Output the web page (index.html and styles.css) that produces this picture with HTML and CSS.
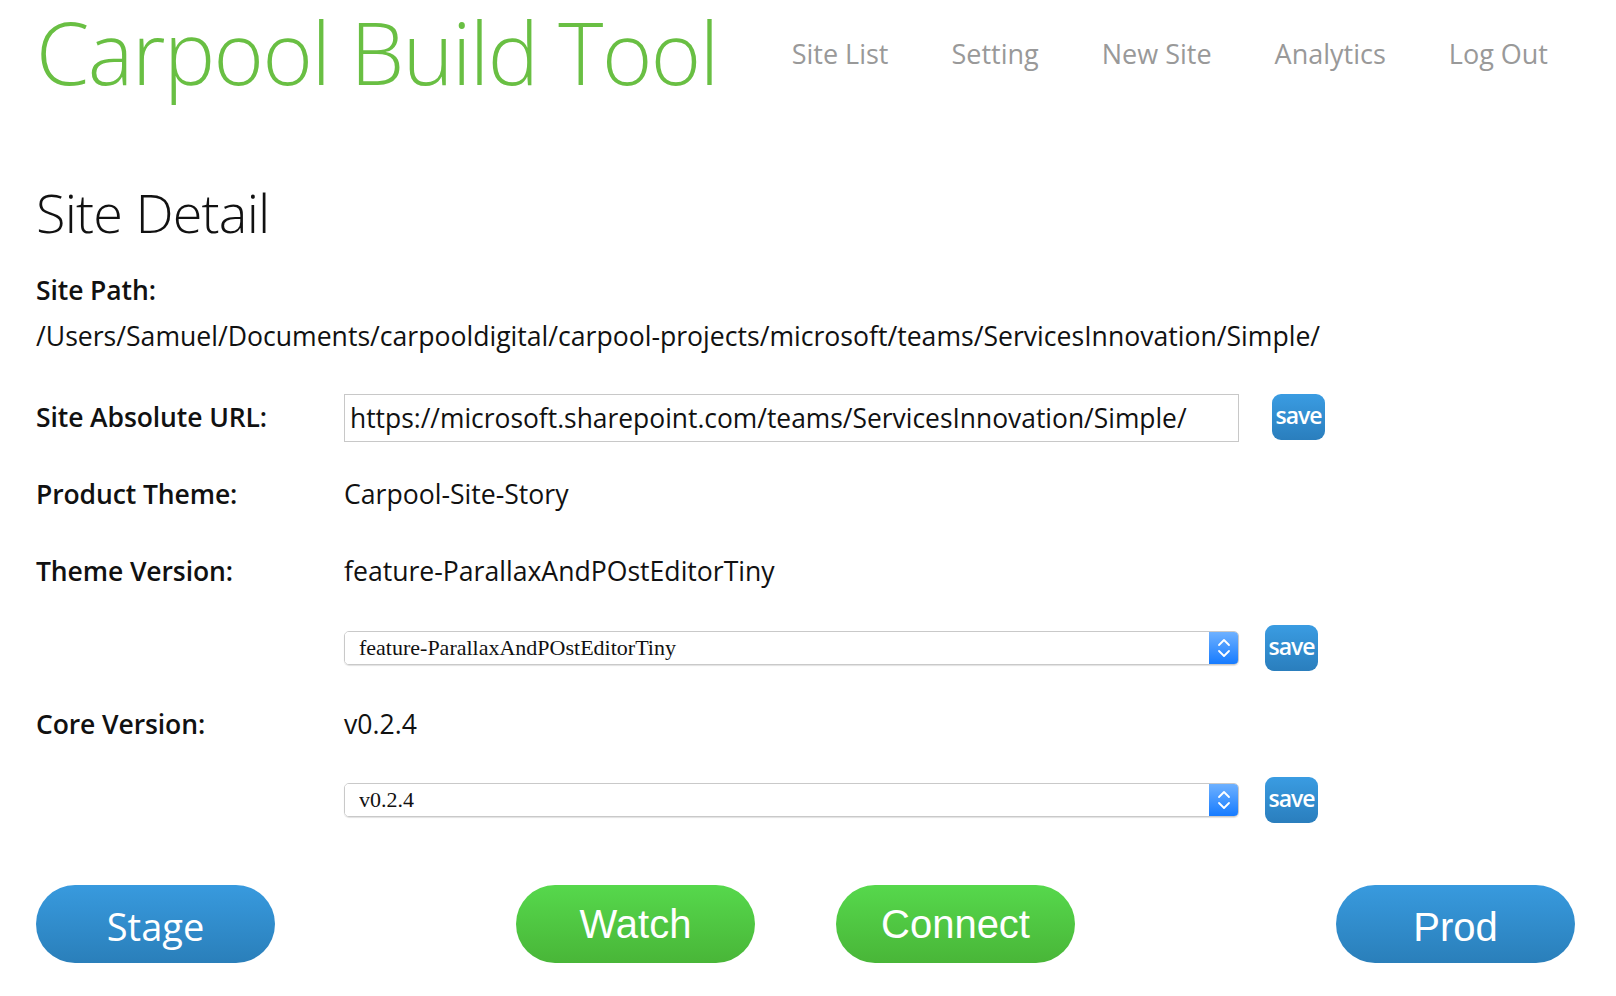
FILE: index.html
```html
<!DOCTYPE html>
<html>
<head>
<meta charset="utf-8">
<title>Carpool Build Tool</title>
<link rel="stylesheet" href="styles.css">
</head>
<body>
<header class="top">
  <h1 class="brand">Carpool Build Tool</h1>
  <nav class="nav">
    <a class="nav-link" href="#">Site List</a>
    <a class="nav-link" href="#">Setting</a>
    <a class="nav-link" href="#">New Site</a>
    <a class="nav-link" href="#">Analytics</a>
    <a class="nav-link" href="#">Log Out</a>
  </nav>
</header>
<main class="content">
  <h2 class="page-title">Site Detail</h2>
  <div class="path-block">
    <div class="label">Site Path:</div>
    <div class="path">/Users/Samuel/Documents/carpooldigital/carpool-projects/microsoft/teams/ServicesInnovation/Simple/</div>
  </div>
  <div class="form">
    <div class="row row-url">
      <div class="label">Site Absolute URL:</div>
      <input class="text-input" type="text" value="https://microsoft.sharepoint.com/teams/ServicesInnovation/Simple/">
      <button class="save save-url">save</button>
    </div>
    <div class="row">
      <div class="label">Product Theme:</div>
      <div class="value">Carpool-Site-Story</div>
    </div>
    <div class="row">
      <div class="label">Theme Version:</div>
      <div class="value">feature-ParallaxAndPOstEditorTiny</div>
    </div>
    <div class="row row-select">
      <div class="label"></div>
      <div class="select">
        <select class="select-el"><option>feature-ParallaxAndPOstEditorTiny</option></select>
        <span class="select-arrow"><svg width="14" height="26" viewBox="0 0 14 26"><path d="M2 10 L7 5 L12 10 M2 16 L7 21 L12 16" fill="none" stroke="#fff" stroke-width="1.8" stroke-linecap="round" stroke-linejoin="round"/></svg></span>
      </div>
      <button class="save">save</button>
    </div>
    <div class="row row-core">
      <div class="label">Core Version:</div>
      <div class="value">v0.2.4</div>
    </div>
    <div class="row row-select">
      <div class="label"></div>
      <div class="select">
        <select class="select-el"><option>v0.2.4</option></select>
        <span class="select-arrow"><svg width="14" height="26" viewBox="0 0 14 26"><path d="M2 10 L7 5 L12 10 M2 16 L7 21 L12 16" fill="none" stroke="#fff" stroke-width="1.8" stroke-linecap="round" stroke-linejoin="round"/></svg></span>
      </div>
      <button class="save">save</button>
    </div>
  </div>
  <div class="actions">
    <button class="pill pill-blue pill-seg">Stage</button>
    <div class="mid-actions">
      <button class="pill pill-green">Watch</button>
      <button class="pill pill-green">Connect</button>
    </div>
    <button class="pill pill-blue pill-prod">Prod</button>
  </div>
</main>
</body>
</html>
```
FILE: styles.css
```css
* { box-sizing: border-box; }
html, body { margin: 0; padding: 0; background: #fff; }
body {
  font-family: "Open Sans", "Noto Sans", sans-serif;
  color: #111;
  width: 1616px;
  height: 996px;
  overflow: hidden;
}
.top {
  display: flex;
  align-items: flex-start;
  justify-content: space-between;
  padding: 0 68px 0 36px;
  height: 150px;
}
.brand {
  margin: -8px 0 0;
  padding: 0;
  flex-shrink: 0;
  white-space: nowrap;
  font-weight: 300;
  font-size: 86px;
  letter-spacing: -1.5px;
  line-height: 1.4;
  color: #69bf43;
}
.nav {
  display: flex;
  gap: 63px;
  padding-top: 34px;
}
.nav-link {
  font-size: 27px;
  color: #999;
  text-decoration: none;
  line-height: 40px;
}
.content { padding: 0 36px; }
.page-title {
  margin: 26px 0 0;
  font-weight: 300;
  font-size: 54px;
  line-height: 72px;
  color: #111;
  letter-spacing: -0.8px;
}
.label {
  font-weight: 600;
  font-size: 26.5px;
  color: #111;
  letter-spacing: -0.1px;
}
.path-block .label { margin-top: 22px; line-height: 40px; }
.path {
  margin-top: 2px;
  font-size: 26.6px;
  line-height: 48px;
}
.form { margin-top: 18px; }
.row {
  display: grid;
  grid-template-columns: 308px 895px auto;
  align-items: center;
  height: 77px;
}
.row-core { height: 75px; }
.value { font-size: 26.6px; }
.text-input {
  height: 48px;
  border: 1px solid #c8c8c8;
  font-family: inherit;
  font-size: 26.4px;
  padding: 0 5px;
  color: #111;
  width: 895px;
  margin-top: 2px;
}
.save {
  margin-left: 26px;
  width: 53px;
  height: 46px;
  border: none;
  border-radius: 9px;
  background: linear-gradient(#3a9ce2, #2a7ebd);
  color: #fff;
  font-family: "Open Sans", sans-serif;
  font-size: 23px;
  font-weight: 600;
  padding: 0 0 3px;
  letter-spacing: -1px;
}
.save-url { margin-left: 33px; }
.select {
  display: flex;
  height: 34px;
  border: 1px solid #c9c9c9;
  border-radius: 5px;
  overflow: hidden;
  box-shadow: 0 1px 1px rgba(0,0,0,0.12);
  width: 895px;
}
.select-el {
  flex: 1;
  appearance: none;
  -webkit-appearance: none;
  border: none;
  background: #fff;
  font-family: "Liberation Serif", serif;
  font-size: 22px;
  padding: 0 14px;
  color: #111;
  outline: none;
}
.select-arrow {
  width: 29px;
  display: flex;
  align-items: center;
  justify-content: center;
  background: linear-gradient(#6eb1ff, #167bff);
}
.actions {
  display: flex;
  align-items: center;
  margin-top: 47px;
  padding-right: 5px;
}
.mid-actions { display: flex; gap: 81px; margin-left: 241px; }
.pill {
  width: 239px;
  height: 78px;
  border: none;
  border-radius: 40px;
  color: #fff;
  font-family: "Liberation Sans", Arial, sans-serif;
  font-size: 40px;
  padding: 0;
}
.pill-seg { font-family: "Open Sans", sans-serif; font-size: 38px; padding-top: 4px; }
.pill-prod { margin-left: auto; padding-top: 6px; }
.pill-blue { background: linear-gradient(#389ade, #2a7fba); }
.pill-green { background: linear-gradient(#56d84c, #49b638); }
```
